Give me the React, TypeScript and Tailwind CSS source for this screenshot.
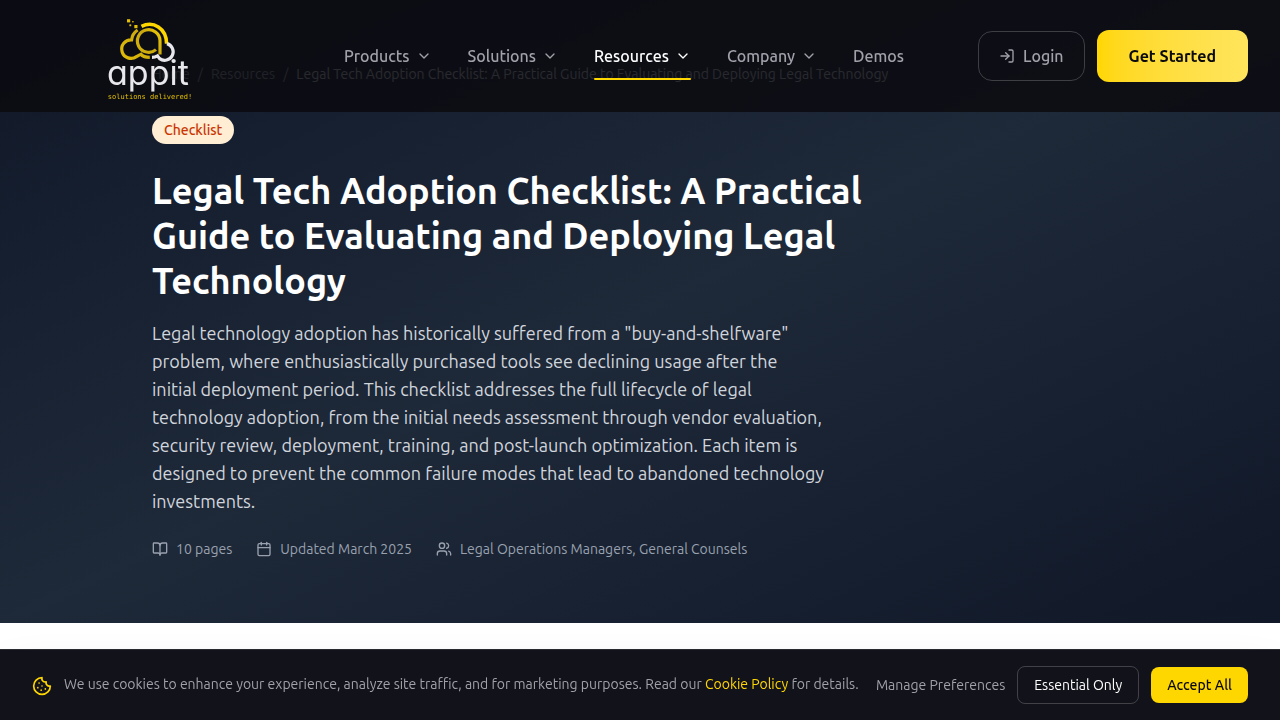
import { BookOpen, Calendar, ChevronDown, Cookie, LogIn, Users } from "lucide-react";

const NAV = [
  { label: "Products", menu: true, active: false },
  { label: "Solutions", menu: true, active: false },
  { label: "Resources", menu: true, active: true },
  { label: "Company", menu: true, active: false },
  { label: "Demos", menu: false, active: false },
];

const META = [
  { icon: BookOpen, text: "10 pages" },
  { icon: Calendar, text: "Updated March 2025" },
  { icon: Users, text: "Legal Operations Managers, General Counsels" },
];

function Logo() {
  return (
    <svg viewBox="0 0 84 84" className="h-[84px] w-[84px] overflow-visible" role="img" aria-label="appit solutions delivered!">
      <defs>
        <linearGradient id="gold" gradientUnits="userSpaceOnUse" x1="12" y1="40" x2="56" y2="8">
          <stop offset="0" stopColor="#e0bc08" />
          <stop offset="0.6" stopColor="#c9a80f" />
          <stop offset="1" stopColor="#ffd700" />
        </linearGradient>
      </defs>
      {/* pixels */}
      <g fill="#e6c000">
        <rect x="18" y="1.2" width="3.2" height="3.2" />
        <rect x="23.2" y="3" width="1.4" height="1.4" />
        <rect x="20.4" y="6.4" width="1.8" height="1.8" />
        <rect x="25.3" y="7" width="3.2" height="3.2" />
      </g>
      {/* cloud */}
      <g fill="none" strokeWidth="3.2">
        <path d="M28.6 12C25 14.5 23 18 22.6 21.8A9.3 9.3 0 1 0 27.5 38.6L32 36.2C34 39 36 39.3 40.8 39.3" stroke="url(#gold)" />
        <path d="M32.5 8.4C44 2.5 57.5 10 57.6 25.8" stroke="#ffd700" strokeWidth="3.6" />
        <path d="M47 31.6A11.3 11.3 0 1 1 51 22.7V36.5" stroke="url(#gold)" />
        <path d="M58 25.6A8.5 8.5 0 1 1 50.6 40.6L48.5 37.8C46.5 39 45.5 39.3 43 39.3" stroke="#e8e8ec" />
      </g>
      <text x="-2" y="67" fill="#e8e8ec" className="font-['Inter',sans-serif] text-[34px] font-normal" style={{ fontFeatureSettings: '"cv11"' }}>
        appit
      </text>
      <text x="41" y="81" textAnchor="middle" fill="#e6c000" className="font-['DejaVu_Sans_Mono',monospace] text-[7px]">
        solutions delivered!
      </text>
    </svg>
  );
}

function Header() {
  return (
    <header className="fixed inset-x-0 top-0 z-20 flex h-28 items-center justify-between bg-[#0a0a0f]/85 px-8">
      <a href="#" className="flex w-[238px] justify-center pt-2">
        <Logo />
      </a>
      <nav className="flex items-center gap-9">
        {NAV.map((item) => (
          <a
            key={item.label}
            href="#"
            className={`relative flex items-center gap-1.5 py-2 text-base font-medium ${
              item.active ? "text-white" : "text-[#a1a1aa]"
            }`}
          >
            {item.label}
            {item.menu && <ChevronDown className="h-4 w-4" />}
            {item.active && <span className="absolute inset-x-0 -bottom-1 h-0.5 rounded-full bg-[#ffd700]" />}
          </a>
        ))}
      </nav>
      <div className="flex items-center gap-3">
        <button className="flex items-center gap-2 rounded-[14px] border border-white/20 px-5 py-3 text-base font-medium text-[#a1a1aa]">
          <LogIn className="h-4 w-4" />
          Login
        </button>
        <button className="rounded-xl bg-linear-to-r from-[#ffd700] to-[#ffe55c] px-8 py-[14px] text-base font-semibold text-[#0a0a0f]">
          Get Started
        </button>
      </div>
    </header>
  );
}

function Hero() {
  return (
    <section className="bg-linear-to-br from-gray-900 via-gray-800 to-gray-900 py-16">
      <div className="mx-auto max-w-5xl px-6">
        <nav aria-label="Breadcrumb" className="mb-8 flex items-center gap-2 text-sm text-gray-400">
          <a href="#">Home</a>
          <span>/</span>
          <a href="#">Resources</a>
          <span>/</span>
          <span className="text-gray-300">
            Legal Tech Adoption Checklist: A Practical Guide to Evaluating and Deploying Legal Technology
          </span>
        </nav>
        <div className="max-w-3xl">
          <span className="mb-6 flex w-fit rounded-full bg-orange-100 px-3 py-1 text-sm font-medium text-orange-700">
            Checklist
          </span>
          <h1 className="mb-4 text-4xl leading-tight font-bold text-white">
            Legal Tech Adoption Checklist: A Practical Guide to Evaluating and Deploying Legal Technology
          </h1>
          <p className="mb-6 max-w-2xl text-lg leading-7 text-gray-300">
            Legal technology adoption has historically suffered from a "buy-and-shelfware" problem, where
            enthusiastically purchased tools see declining usage after the initial deployment period. This checklist
            addresses the full lifecycle of legal technology adoption, from the initial needs assessment through vendor
            evaluation, security review, deployment, training, and post-launch optimization. Each item is designed to
            prevent the common failure modes that lead to abandoned technology investments.
          </p>
          <div className="flex flex-wrap gap-6 text-sm text-gray-400">
            {META.map(({ icon: Icon, text }) => (
              <span key={text} className="flex items-center gap-2">
                <Icon className="h-4 w-4" />
                {text}
              </span>
            ))}
          </div>
        </div>
      </div>
    </section>
  );
}

function CookieBar() {
  return (
    <div
      role="region"
      aria-label="Cookies"
      className="fixed inset-x-0 bottom-0 z-20 flex items-center justify-between gap-4 border-t border-white/10 bg-[#12121a] px-8 py-4 text-sm shadow-2xl"
    >
      <div className="flex items-start gap-3">
        <Cookie className="mt-0.5 h-5 w-5 shrink-0 text-[#ffd700]" />
        <p className="text-[#a1a1aa]">
          We use cookies to enhance your experience, analyze site traffic, and for marketing purposes. Read our{" "}
          <a href="#" className="text-[#ffd700]">
            Cookie Policy
          </a>{" "}
          for details.
        </p>
      </div>
      <div className="flex shrink-0 items-center gap-3">
        <button className="text-[#a1a1aa]">Manage Preferences</button>
        <button className="rounded-lg border border-white/20 px-4 py-2 text-white">Essential Only</button>
        <button className="rounded-lg bg-[#ffd700] px-4 py-2 font-medium text-[#0a0a0f]">Accept All</button>
      </div>
    </div>
  );
}

export default function App() {
  return (
    <div className="min-h-screen bg-white font-['Ubuntu','Open_Sans',sans-serif]">
      <Header />
      <Hero />
      <CookieBar />
    </div>
  );
}
